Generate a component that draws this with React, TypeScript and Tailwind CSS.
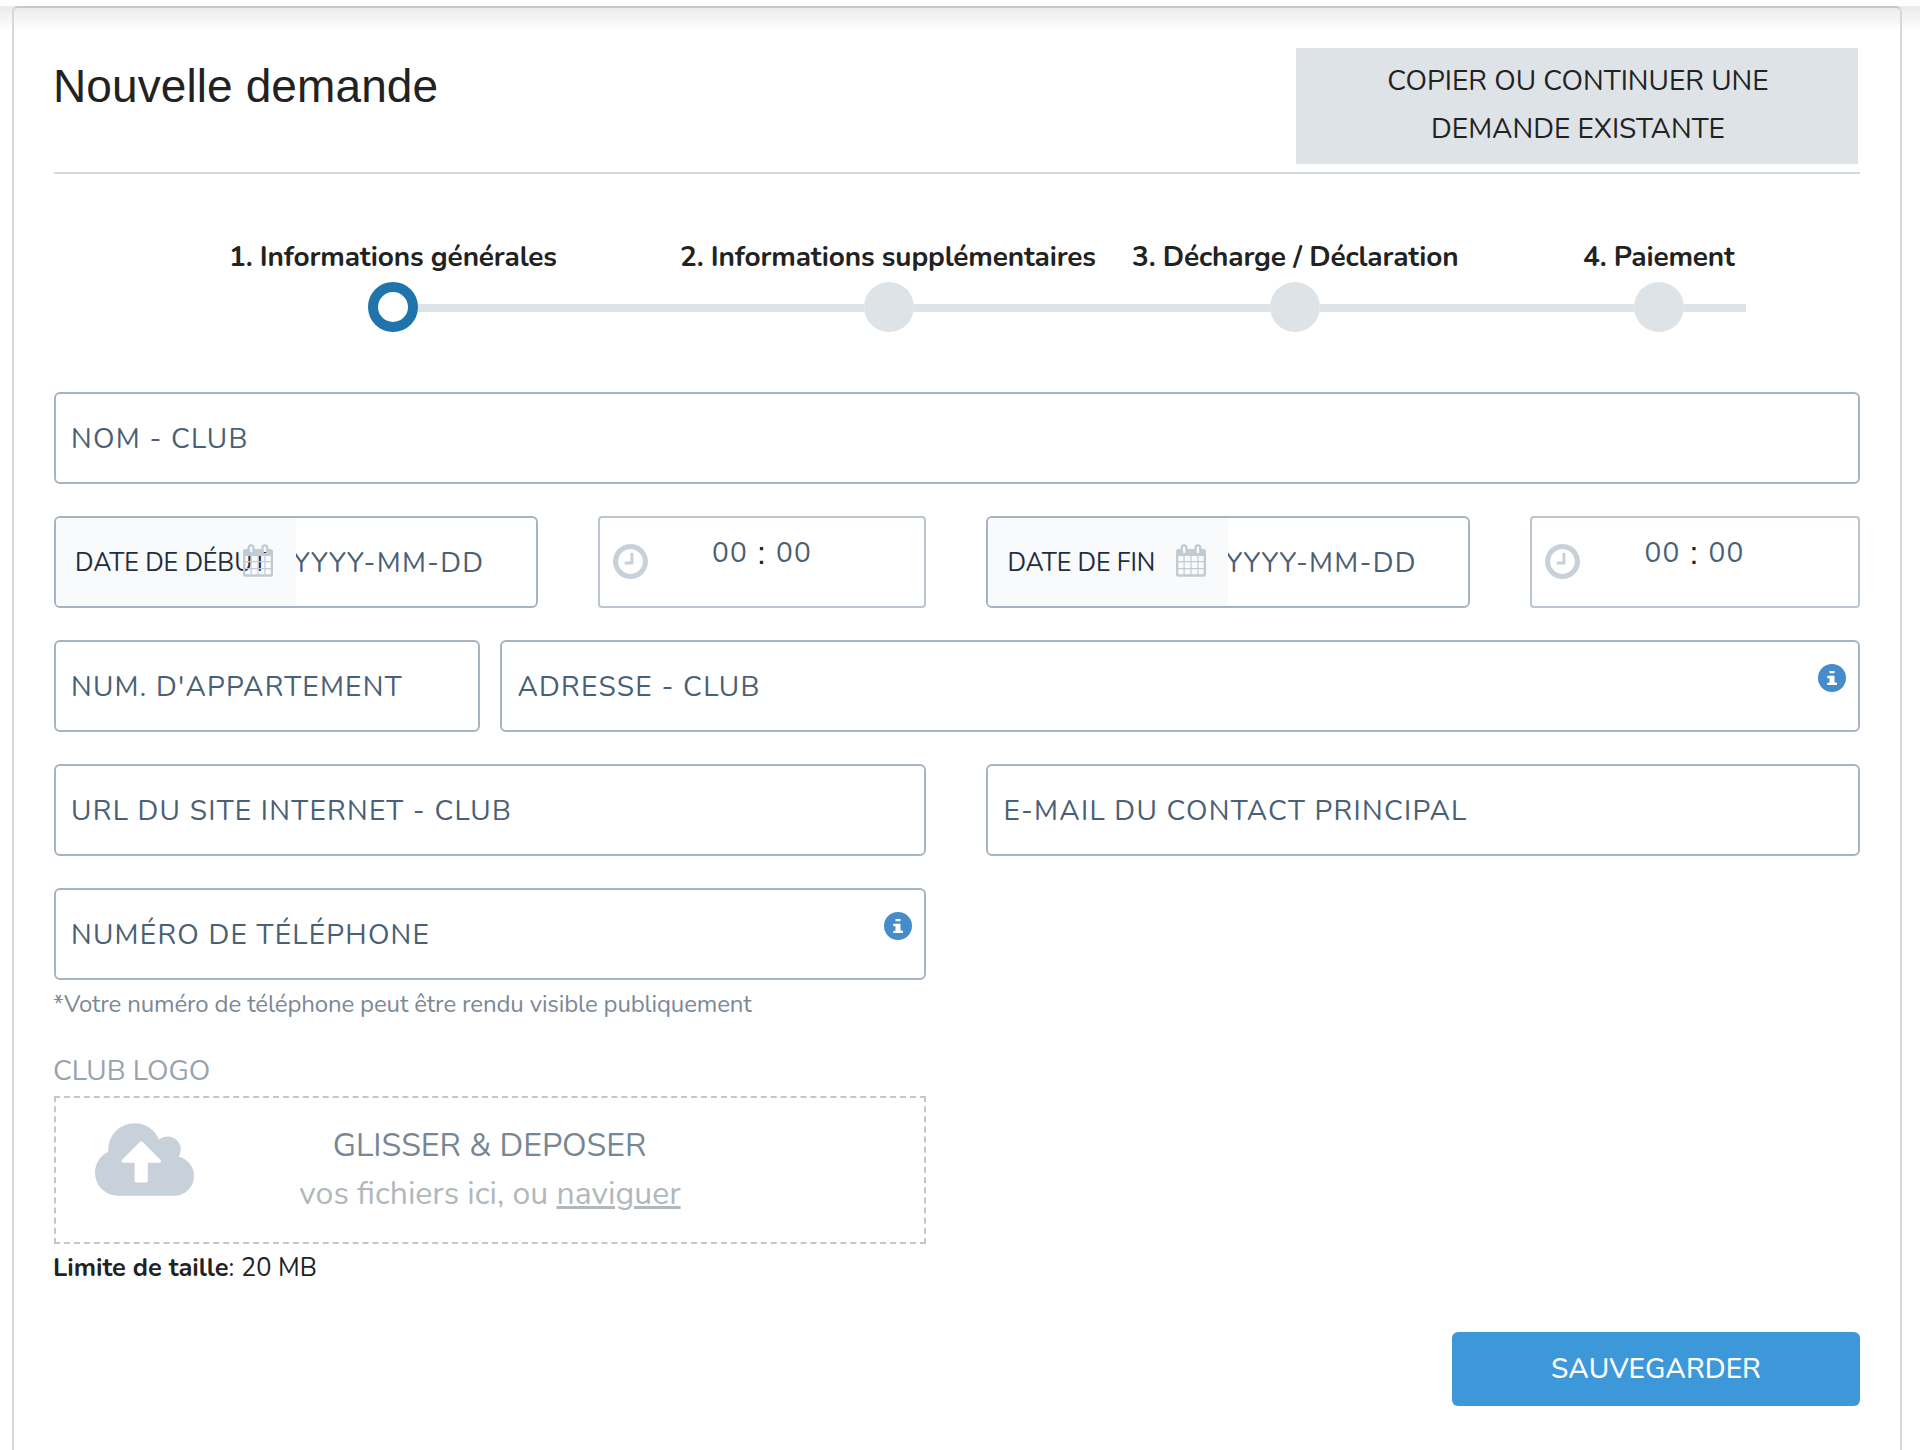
import { type FC, type ReactNode } from "react";
import clsx from "clsx";

interface IconProps {
  className?: string;
}

interface FieldProps {
  label: string;
  className?: string;
  info?: boolean;
}

interface DateFieldProps {
  label: string;
}

const steps = [
  { label: "1. Informations générales", width: "w-[327px]", gap: "ml-[175px]" },
  { label: "2. Informations supplémentaires", width: "w-[415px]", gap: "ml-[124px]" },
  { label: "3. Décharge / Déclaration", width: "w-[326px]", gap: "ml-[37px]" },
  { label: "4. Paiement", width: "w-[153px]", gap: "ml-[125px]" },
];

const CalendarIcon: FC<IconProps> = ({ className }) => (
  <svg viewBox="0 0 1664 1792" fill="currentColor" className={className}>
    <path d="M128 1664h288v-288H128v288zM480 1664h320v-288H480v288zM128 1312h288V992H128v320zM480 1312h320V992H480v320zM128 928h288V640H128v288zM864 1664h320v-288H864v288zM480 928h320V640H480v288zM1248 1664h288v-288h-288v288zM864 1312h320V992H864v320zM512 448V160q0-13-9.5-22.5T480 128h-64q-13 0-22.5 9.5T384 160v288q0 13 9.5 22.5T416 480h64q13 0 22.5-9.5T512 448zM1248 1312h288V992h-288v320zM864 928h320V640H864v288zM1248 928h288V640h-288v288zM1280 448V160q0-13-9.5-22.5T1248 128h-64q-13 0-22.5 9.5T1152 160v288q0 13 9.5 22.5t22.5 9.5h64q13 0 22.5-9.5t9.5-22.5zM1664 384v1280q0 52-38 90t-90 38H128q-52 0-90-38t-38-90V384q0-52 38-90t90-38h128v-96q0-66 47-113T416 0h64q66 0 113 47t47 113v96h384v-96q0-66 47-113t113-47h64q66 0 113 47t47 113v96h128q52 0 90 38t38 90z" />
  </svg>
);

const ClockIcon: FC<IconProps> = ({ className }) => (
  <svg viewBox="0 128 1536 1536" fill="currentColor" className={className}>
    <path d="M896 544v448q0 14-9 23t-23 9H544q-14 0-23-9t-9-23v-64q0-14 9-23t23-9h224V544q0-14 9-23t23-9h64q14 0 23 9t9 23zM1312 896q0-148-73-273t-198-198-273-73-273 73-198 198-73 273 73 273 198 198 273 73 273-73 198-198 73-273zM1536 896q0 209-103 385.5T1153.5 1561 768 1664t-385.5-103T103 1281.5 0 896t103-385.5T382.5 231 768 128t385.5 103T1433 510.5 1536 896z" />
  </svg>
);

const InfoIcon: FC<IconProps> = ({ className }) => (
  <svg viewBox="0 0 28 28" className={className}>
    <circle cx="14" cy="14" r="14" fill="currentColor" />
    <path
      fill="#fff"
      d="M11.5 7h5v2.3h-5zM9.7 11.8h6.8v6.8h2v0.2q0.5 0 0.5 0.5v1.2q0 0.5-0.5 0.5H9.7q-0.5 0-0.5-0.5v-1.2q0-0.5 0.5-0.5h1.8v-4.6H9.7q-0.5 0-0.5-0.5v-1.4q0-0.5 0.5-0.5z"
    />
  </svg>
);

const CloudUploadIcon: FC<IconProps> = ({ className }) => (
  <svg viewBox="0 128 1920 1408" fill="currentColor" className={className}>
    <path d="M1280 864q0-14-9-23L919 489q-9-9-23-9t-23 9L522 840q-10 12-10 24 0 14 9 23t23 9h224v352q0 13 9.5 22.5t22.5 9.5h192q13 0 22.5-9.5t9.5-22.5V896h224q13 0 22.5-9.5T1280 864zM1920 1152q0 159-112.5 271.5T1536 1536H448q-185 0-316.5-131.5T0 1088q0-130 70-240t188-165q-2-30-2-43 0-212 150-362t362-150q156 0 285.5 87T1242 446q71-62 166-62 106 0 181 75t75 181q0 76-41 138 130 31 213.5 135.5T1920 1152z" />
  </svg>
);

const Row: FC<{ children: ReactNode }> = ({ children }) => (
  <div className="flex h-[92px]">{children}</div>
);

const Field: FC<FieldProps> = ({ label, className, info }) => (
  <div
    className={clsx(
      "flex h-[92px] justify-between rounded-md border-2 border-[#a7b3c0] pr-3 pl-[15px]",
      className,
    )}
  >
    <label className="self-center pt-0.5 text-[28px] tracking-[1.26px] whitespace-nowrap text-[#4a6075]">
      {label}
    </label>
    {info && <InfoIcon className="mt-[22px] size-7 text-[#468ccb]" />}
  </div>
);

const DateField: FC<DateFieldProps> = ({ label }) => (
  <div className="flex h-[92px] w-[484px] overflow-hidden rounded-md border-2 border-[#a7b3c0]">
    <div className="relative flex w-60 shrink-0 items-center bg-[#f8fafc] pl-[19px]">
      <span className="pt-[3px] text-[25px] tracking-[-0.1px] whitespace-nowrap text-[#1f2d3d]">
        {label}
      </span>
      <CalendarIcon className="absolute top-[26px] left-[187.2px] h-[33px] w-[30px] text-[#c2cad2]" />
    </div>
    <div className="flex flex-1 items-center overflow-hidden pt-0.5">
      <span className="-ml-[3px] text-[28px] tracking-[1.26px] whitespace-nowrap text-[#4a6075]">
        YYYY-MM-DD
      </span>
    </div>
  </div>
);

const TimeField: FC<{ className: string }> = ({ className }) => (
  <div className={clsx("flex h-[92px] rounded border-2 border-[#bcc6d0] pl-[13px]", className)}>
    <ClockIcon className="mt-[26px] size-[35px] shrink-0 text-[#c8d0da]" />
    <div className="ml-16 flex pt-4 text-[28px] leading-[38px] text-[#4a6075]">
      <span className="w-[44px] tracking-[1.26px]">00</span>
      <span className="w-[20px] pl-px font-['Liberation_Sans',sans-serif] text-[32px] text-[#222]">
        :
      </span>
      <span className="tracking-[1.26px]">00</span>
    </div>
  </div>
);

const Stepper: FC = () => (
  <div>
    <div className="flex">
      {steps.map(({ label, width, gap }) => (
        <span
          key={label}
          className={clsx(
            "text-[28px] leading-[38px] font-bold tracking-[-0.16px] whitespace-nowrap",
            width,
            gap,
          )}
        >
          {label}
        </span>
      ))}
    </div>
    <div className="mt-[6px] ml-[314px] flex items-center">
      <div className="size-[50px] rounded-full border-[10px] border-[#1f74ab] bg-white" />
      <div className="mt-0.5 h-2 w-[446px] bg-[#dee3e7]" />
      <div className="size-[50px] rounded-full bg-[#dee3e7]" />
      <div className="mt-0.5 h-2 w-[356px] bg-[#dee3e7]" />
      <div className="size-[50px] rounded-full bg-[#dee3e7]" />
      <div className="mt-0.5 h-2 w-[314px] bg-[#dee3e7]" />
      <div className="size-[50px] rounded-full bg-[#dee3e7]" />
      <div className="mt-0.5 h-2 w-[62px] bg-[#dee3e7]" />
    </div>
  </div>
);

const App: FC = () => {
  return (
    <div className="h-[1450px] overflow-hidden bg-white pt-1.5 font-['Nunito','Lato',sans-serif] text-[#222]">
      <div className="h-full bg-linear-to-b from-[#ebebeb] to-transparent bg-[length:100%_26px] bg-no-repeat pr-[18px] pl-3">
        <div className="h-[1500px] rounded-t-md border-2 border-[#d3dade] border-t-[#c3cacd] px-10 pt-10">
          <div className="flex h-[126px] justify-between border-b-2 border-[#d3d9df]">
            <h1 className="mt-2.5 -ml-px font-['Liberation_Sans',Arial,sans-serif] text-[46px] leading-[56px] tracking-[0.1px]">
              Nouvelle demande
            </h1>
            <button className="mr-0.5 h-[116px] w-[562px] bg-[#dee3e7] pr-[63px] pb-0.5 pl-[65px] text-[28px] leading-[48px]">
              COPIER OU CONTINUER UNE DEMANDE EXISTANTE
            </button>
          </div>

          <div className="mt-16">
            <Stepper />
          </div>

          <form className="mt-[60px] flex flex-col gap-8">
            <Field label="NOM - CLUB" />
            <Row>
              <DateField label="DATE DE DÉBUT" />
              <TimeField className="ml-[60px] w-[328px]" />
              <div className="w-[60.4px]" />
              <DateField label="DATE DE FIN" />
              <TimeField className="ml-[60px] w-[329.6px]" />
            </Row>
            <Row>
              <Field label="NUM. D'APPARTEMENT" className="w-[426px]" />
              <Field label="ADRESSE - CLUB" info className="ml-[20.4px] flex-1" />
            </Row>
            <Row>
              <Field label="URL DU SITE INTERNET - CLUB" className="w-[872px]" />
              <Field label="E-MAIL DU CONTACT PRINCIPAL" className="ml-[60.4px] flex-1" />
            </Row>
            <div className="w-[872px]">
              <Field label="NUMÉRO DE TÉLÉPHONE" info />
              <p className="mt-[7px] -ml-px text-2xl leading-[34px] tracking-[-0.14px] text-[#7c8895]">
                *Votre numéro de téléphone peut être rendu visible publiquement
              </p>
              <p className="mt-[31px] -ml-px text-[28px] leading-[38px] text-[#98a3ae]">
                CLUB LOGO
              </p>
              <div className="relative mt-1.5 h-[148px] border-2 border-dashed border-[#bdc8d1] pt-6 text-center text-[32px] leading-[48px]">
                <CloudUploadIcon className="absolute top-[25px] left-[39px] h-[73px] w-[99px] text-[#c8d0da]" />
                <p className="pr-px text-[#778695]">GLISSER &amp; DEPOSER</p>
                <p className="text-[#b0b8bc]">
                  vos fichiers ici, ou <a className="underline">naviguer</a>
                </p>
              </div>
              <p className="mt-1.5 -ml-px text-[25.4px] leading-[36px]">
                <b>Limite de taille</b>: 20 MB
              </p>
            </div>
          </form>

          <div className="mt-[46px] flex justify-end">
            <button className="h-[74px] w-[408px] rounded-md bg-[#3d98d9] text-[28px] font-medium text-white">
              SAUVEGARDER
            </button>
          </div>
        </div>
      </div>
    </div>
  );
};

export default App;
